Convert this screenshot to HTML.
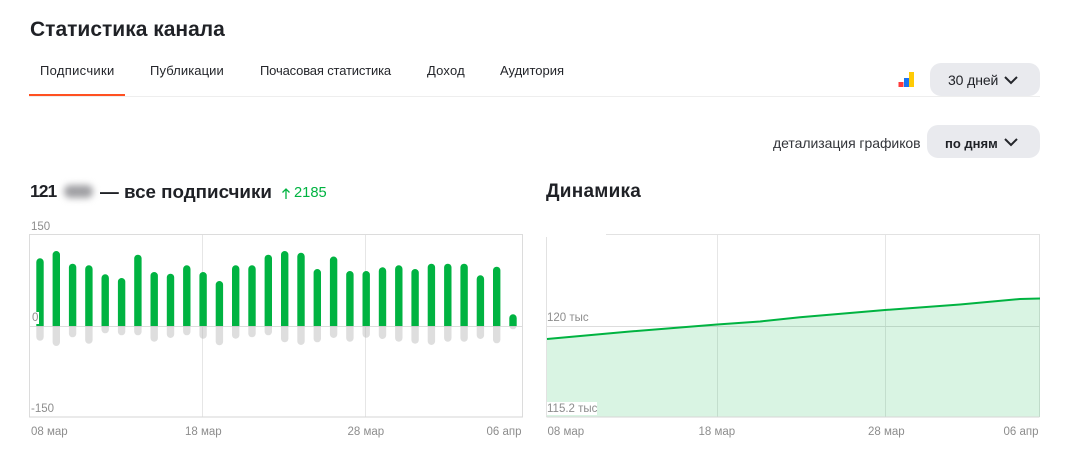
<!DOCTYPE html>
<html lang="ru"><head><meta charset="utf-8"><style>
html,body{margin:0;padding:0;background:#fff}
body{width:1078px;height:460px;position:relative;overflow:hidden;font-family:"Liberation Sans",sans-serif;color:#1f2126}
.t{position:absolute;white-space:nowrap;line-height:1}
.tab{font-size:13px;top:64px;color:#24262b}
.ax{font-size:11.5px;color:#8d8d8d}
.btn{position:absolute;background:#e9eaee;border-radius:11px}
svg{position:absolute;left:0;top:0}
</style></head><body>
<div class="t" style="left:30px;top:19px;font-size:21px;font-weight:bold">Статистика канала</div>
<div class="t tab" style="left:40px;letter-spacing:.3px">Подписчики</div>
<div class="t tab" style="left:150px;letter-spacing:.1px">Публикации</div>
<div class="t tab" style="left:260px;letter-spacing:-.16px">Почасовая статистика</div>
<div class="t tab" style="left:427px;letter-spacing:.2px">Доход</div>
<div class="t tab" style="left:500px">Аудитория</div>
<div class="btn" style="left:930px;top:63px;width:110px;height:33px"></div>
<div class="btn" style="left:927px;top:125px;width:113px;height:33px"></div>
<div class="t" style="left:948px;top:73px;font-size:14px;letter-spacing:-.1px">30 дней</div>
<div class="t" style="left:945px;top:136.500px;font-size:13px;font-weight:bold">по дням</div>
<div class="t" style="left:773px;top:136px;font-size:14px;color:#33353a;letter-spacing:-.05px">детализация графиков</div>
<div class="t" style="left:30px;top:183px;font-size:17.500px;font-weight:bold;letter-spacing:-1px">121</div>
<div style="position:absolute;left:64px;top:185px;width:29px;height:13px;background:#a0a0a4;border-radius:6px;filter:blur(3.500px)"></div>
<div class="t" style="left:100px;top:182.500px;font-size:18.800px;font-weight:bold">— все подписчики</div>
<div class="t" style="left:294px;top:186px;font-size:14.700px;color:#00b341">2185</div>
<div class="t" style="left:546px;top:182px;font-size:19px;font-weight:bold;letter-spacing:.25px">Динамика</div>
<svg width="1078" height="460" viewBox="0 0 1078 460">
<rect x="29" y="96" width="1011" height="1" fill="#eeeeee"/>
<rect x="29" y="94" width="96" height="2" fill="#ff5021"/>
<path d="M1005 77l6 6 6-6" fill="none" stroke="#24262b" stroke-width="2"/>
<path d="M1005 139l6 6 6-6" fill="none" stroke="#24262b" stroke-width="2"/>
<rect x="898.500" y="82" width="5" height="5" fill="#ff3b3b"/>
<rect x="904" y="78" width="5" height="9" fill="#1a73f0"/>
<rect x="909" y="72" width="5" height="15" fill="#ffcb05"/>
<path d="M286 199v-10M282.500 192.500l3.500-3.500 3.500 3.500" fill="none" stroke="#00b341" stroke-width="1.300"/>
<!-- left chart -->
<rect x="29.500" y="234.500" width="493" height="182.500" fill="none" stroke="#dcdcdc"/>
<path d="M202.500 235V417M365.500 235V417" stroke="#e6e6e6"/>
<path d="M30 326.500H522" stroke="#dddddd"/>
<rect x="29.500" y="416.500" width="493" height="1" fill="#d6d6d6"/>
<g fill="#b5b5b5" fill-opacity=".45">
<path d="M36.300 326V337a3.700 3.700 0 0 0 7.400 0V326Z"/><path d="M52.600 326V342.300a3.700 3.700 0 0 0 7.400 0V326Z"/><path d="M68.900 326V333.600a3.700 3.700 0 0 0 7.400 0V326Z"/><path d="M85.200 326V340a3.700 3.700 0 0 0 7.400 0V326Z"/><path d="M101.500 326V329.600a3.700 3.700 0 0 0 7.400 0V326Z"/><path d="M117.900 326V331.600a3.700 3.700 0 0 0 7.400 0V326Z"/><path d="M134.200 326V331.600a3.700 3.700 0 0 0 7.400 0V326Z"/><path d="M150.500 326V338a3.700 3.700 0 0 0 7.400 0V326Z"/><path d="M166.800 326V334.300a3.700 3.700 0 0 0 7.400 0V326Z"/><path d="M183.100 326V331.600a3.700 3.700 0 0 0 7.400 0V326Z"/><path d="M199.400 326V335a3.700 3.700 0 0 0 7.400 0V326Z"/><path d="M215.700 326V341.600a3.700 3.700 0 0 0 7.400 0V326Z"/><path d="M232 326V335a3.700 3.700 0 0 0 7.400 0V326Z"/><path d="M248.300 326V333.600a3.700 3.700 0 0 0 7.400 0V326Z"/><path d="M264.600 326V331.600a3.700 3.700 0 0 0 7.400 0V326Z"/><path d="M281 326V338.600a3.700 3.700 0 0 0 7.400 0V326Z"/><path d="M297.300 326V341.300a3.700 3.700 0 0 0 7.400 0V326Z"/><path d="M313.600 326V338.600a3.700 3.700 0 0 0 7.400 0V326Z"/><path d="M329.900 326V334.300a3.700 3.700 0 0 0 7.400 0V326Z"/><path d="M346.200 326V338a3.700 3.700 0 0 0 7.400 0V326Z"/><path d="M362.500 326V334a3.700 3.700 0 0 0 7.400 0V326Z"/><path d="M378.800 326V335.300a3.700 3.700 0 0 0 7.400 0V326Z"/><path d="M395.100 326V338a3.700 3.700 0 0 0 7.400 0V326Z"/><path d="M411.400 326V340a3.700 3.700 0 0 0 7.400 0V326Z"/><path d="M427.700 326V341.300a3.700 3.700 0 0 0 7.400 0V326Z"/><path d="M444.100 326V338a3.700 3.700 0 0 0 7.400 0V326Z"/><path d="M460.400 326V338a3.700 3.700 0 0 0 7.400 0V326Z"/><path d="M476.700 326V335.300a3.700 3.700 0 0 0 7.400 0V326Z"/><path d="M493 326V339.600a3.700 3.700 0 0 0 7.400 0V326Z"/><path d="M509.300 326V325.600a3.700 3.700 0 0 0 7.400 0V326Z"/>
</g>
<g fill="#00b341">
<path d="M36.300 326V262a3.700 3.700 0 0 1 7.400 0V326Z"/><path d="M52.600 326V254.700a3.700 3.700 0 0 1 7.400 0V326Z"/><path d="M68.900 326V267.400a3.700 3.700 0 0 1 7.400 0V326Z"/><path d="M85.200 326V269a3.700 3.700 0 0 1 7.400 0V326Z"/><path d="M101.500 326V278a3.700 3.700 0 0 1 7.400 0V326Z"/><path d="M117.900 326V281.700a3.700 3.700 0 0 1 7.400 0V326Z"/><path d="M134.200 326V258.400a3.700 3.700 0 0 1 7.400 0V326Z"/><path d="M150.500 326V275.700a3.700 3.700 0 0 1 7.400 0V326Z"/><path d="M166.800 326V277.400a3.700 3.700 0 0 1 7.400 0V326Z"/><path d="M183.100 326V269a3.700 3.700 0 0 1 7.400 0V326Z"/><path d="M199.400 326V275.700a3.700 3.700 0 0 1 7.400 0V326Z"/><path d="M215.700 326V284.700a3.700 3.700 0 0 1 7.400 0V326Z"/><path d="M232 326V269a3.700 3.700 0 0 1 7.400 0V326Z"/><path d="M248.300 326V269a3.700 3.700 0 0 1 7.400 0V326Z"/><path d="M264.600 326V258.400a3.700 3.700 0 0 1 7.400 0V326Z"/><path d="M281 326V254.700a3.700 3.700 0 0 1 7.400 0V326Z"/><path d="M297.300 326V256.500a3.700 3.700 0 0 1 7.400 0V326Z"/><path d="M313.600 326V272.700a3.700 3.700 0 0 1 7.400 0V326Z"/><path d="M329.900 326V260.200a3.700 3.700 0 0 1 7.400 0V326Z"/><path d="M346.200 326V274.700a3.700 3.700 0 0 1 7.400 0V326Z"/><path d="M362.500 326V274.700a3.700 3.700 0 0 1 7.400 0V326Z"/><path d="M378.800 326V271a3.700 3.700 0 0 1 7.400 0V326Z"/><path d="M395.100 326V269a3.700 3.700 0 0 1 7.400 0V326Z"/><path d="M411.400 326V272.700a3.700 3.700 0 0 1 7.400 0V326Z"/><path d="M427.700 326V267.400a3.700 3.700 0 0 1 7.400 0V326Z"/><path d="M444.100 326V267.400a3.700 3.700 0 0 1 7.400 0V326Z"/><path d="M460.400 326V267.400a3.700 3.700 0 0 1 7.400 0V326Z"/><path d="M476.700 326V279a3.700 3.700 0 0 1 7.400 0V326Z"/><path d="M493 326V270.400a3.700 3.700 0 0 1 7.400 0V326Z"/><path d="M509.300 326V318a3.700 3.700 0 0 1 7.400 0V326Z"/>
</g>
<!-- right chart -->
<path d="M606 234.500H1039.500V417M546.500 237V417" fill="none" stroke="#e2e2e2"/>
<path d="M717.500 235V417M885.500 235V417" stroke="#e6e6e6"/>
<path d="M547 326.500H1040" stroke="#dddddd"/>
<path d="M547 339L630 331.500L717 324.500L760 321.500L800 317.300L885 310L960 304.500L1020 299L1040 298.500V417H547Z" fill="#00b341" fill-opacity=".15"/>
<path d="M547 339L630 331.500L717 324.500L760 321.500L800 317.300L885 310L960 304.500L1020 299L1040 298.500" fill="none" stroke="#00b341" stroke-width="2"/>
<rect x="546.500" y="416.500" width="493" height="1" fill="#d6d6d6"/>
<rect x="547" y="402" width="50" height="13" fill="#fff"/>
<rect x="31" y="312" width="8" height="12" fill="#fff"/>
</svg>
<div class="t ax" style="left:31px;top:222px">150</div>
<div class="t ax" style="left:32px;top:313px">0</div>
<div class="t ax" style="left:31px;top:404px">-150</div>
<div class="t ax" style="left:31px;top:427px">08 мар</div>
<div class="t ax" style="left:185px;top:427px">18 мар</div>
<div class="t ax" style="left:347.500px;top:427px">28 мар</div>
<div class="t ax" style="left:486.500px;top:427px">06 апр</div>
<div class="t ax" style="left:547px;top:313px">120 тыс</div>
<div class="t ax" style="left:547px;top:404px">115.2 тыс</div>
<div class="t ax" style="left:547.500px;top:427px">08 мар</div>
<div class="t ax" style="left:698.500px;top:427px">18 мар</div>
<div class="t ax" style="left:868px;top:427px">28 мар</div>
<div class="t ax" style="left:1003.500px;top:427px">06 апр</div>
</body></html>
